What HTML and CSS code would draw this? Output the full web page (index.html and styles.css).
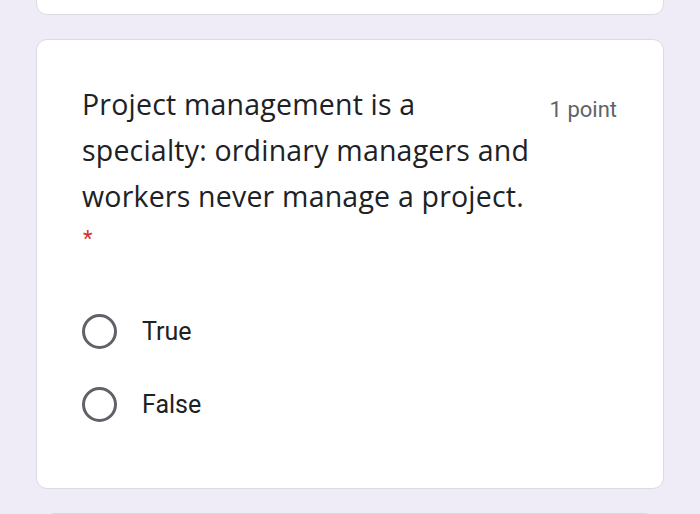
FILE: index.html
```html
<!DOCTYPE html>
<html>
<head>
<meta charset="utf-8">
<link rel="stylesheet" href="styles.css">
</head>
<body>
<div class="page">
  <div class="card card-prev"></div>
  <div class="card question">
    <div class="q-head">
      <div class="q-title">Project management is a<br>specialty: ordinary managers and<br>workers never manage a project.</div>
      <div class="q-points">1 point</div>
    </div>
    <div class="required">*</div>
    <div class="options">
      <div class="option"><span class="radio"></span><span class="opt-label">True</span></div>
      <div class="option"><span class="radio"></span><span class="opt-label">False</span></div>
    </div>
  </div>
  <div class="card card-next"></div>
</div>
</body>
</html>
```
FILE: styles.css
```css
html, body {
  margin: 0;
  padding: 0;
  background: #efecf7;
  overflow: hidden;
}
.page {
  width: 700px;
  height: 514px;
  overflow: hidden;
  display: flex;
  flex-direction: column;
  align-items: center;
  gap: 24px;
}
.card {
  width: 626px;
  background: #fff;
  border: 1px solid #dcdae2;
  border-radius: 11px;
  box-sizing: border-box;
  flex-shrink: 0;
}
.card-prev {
  height: 64px;
  margin-top: -49px;
  width: 628px;
}
.question {
  width: 628px;
  height: 450px;
  padding: 41px 46px 0 45px;
}
.card-next {
  width: 612px;
  height: 40px;
  border-color: #d9d7e0;
  background: #f1eff8;
}
.q-head {
  display: flex;
  justify-content: space-between;
  align-items: flex-start;
}
.q-title {
  flex-shrink: 0;
  white-space: nowrap;
  font-family: "Open Sans", sans-serif;
  font-size: 28.5px;
  line-height: 46px;
  letter-spacing: 0.2px;
  color: #202124;
}
.q-points {
  font-family: Roboto, sans-serif;
  font-size: 22px;
  color: #5f6368;
  margin-top: 16px;
}
.required {
  font-family: Roboto, sans-serif;
  font-size: 22px;
  color: #d93025;
  margin-top: 5px;
  margin-left: 1px;
  height: 30px;
  line-height: 30px;
}
.options {
  margin-top: 60px;
  display: flex;
  flex-direction: column;
  gap: 38px;
}
.option {
  display: flex;
  align-items: center;
  gap: 25px;
  height: 35px;
}
.radio {
  width: 35px;
  height: 35px;
  box-sizing: border-box;
  border: 3.5px solid #5f6368;
  border-radius: 50%;
}
.opt-label {
  font-family: Roboto, sans-serif;
  font-size: 25px;
  color: #202124;
}
```
